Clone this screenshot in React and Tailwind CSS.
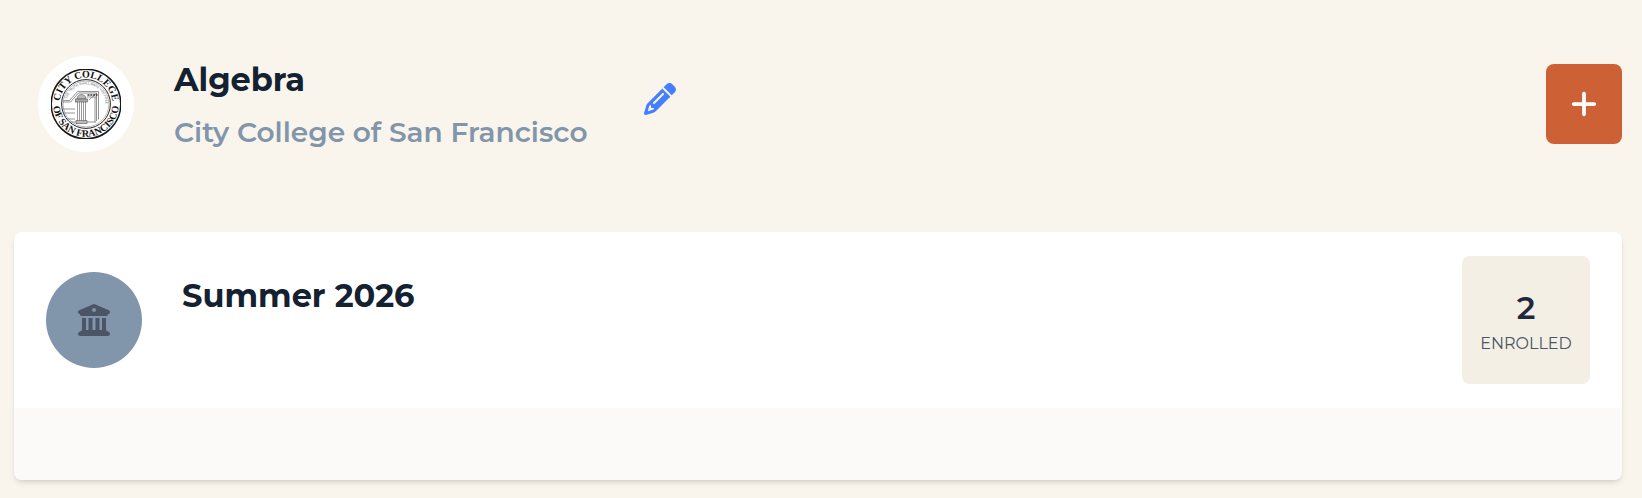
import React from 'react';
import { FaBuildingColumns, FaPencil, FaPlus } from 'react-icons/fa6';

const CollegeSeal = () => (
  <svg viewBox="0 0 70 70" className="w-[70px] h-[70px]" role="img" aria-label="City College of San Francisco seal">
    <defs>
      <path id="seal-top" d="M8.6 35a26.4 26.4 0 0 1 52.8 0" />
      <path id="seal-bottom" d="M2.2 35a32.8 32.8 0 0 0 65.6 0" />
      <path id="seal-motto" d="M15.3 35a19.7 19.7 0 0 1 39.4 0v5" />
    </defs>
    <circle cx="35" cy="35" r="34.8" fill="white" stroke="#161616" strokeWidth="1.5" />
    <circle cx="35" cy="35" r="24.4" fill="none" stroke="#222" strokeWidth="1" />
    <circle cx="35" cy="35" r="22.9" fill="none" stroke="#777" strokeWidth="0.5" />
    <g fill="#111" fontFamily="Liberation Serif, serif" fontWeight="700" textAnchor="middle">
      <text fontSize="10">
        <textPath href="#seal-top" startOffset="50%">CITY COLLEGE</textPath>
      </text>
      <text fontSize="10">
        <textPath href="#seal-bottom" startOffset="50%">OF SAN FRANCISCO</textPath>
      </text>
    </g>
    <text fill="#555" fontSize="3.2" fontFamily="Liberation Sans, sans-serif" textAnchor="middle">
      <textPath href="#seal-motto" startOffset="50%">THE TRUTH SHALL MAKE YOU FREE</textPath>
    </text>
    {/* Archway and column */}
    <g fill="none" stroke="#666" strokeWidth="0.7">
      <path d="M12.500 31.500h6l8-9h21v28" />
      <path d="M12 33h7.500l8-9h18v28M44 28v25" />
      <path d="M36 28h10M38 31l8-7" />
      <path d="M12 40h12M13 44h11M16 50h8M19 53h26" />
    </g>
    <g stroke="#555" strokeWidth="0.6">
      <path d="M26 30c0-6 9-6 9 0z" fill="#bbb" />
      <rect x="24.500" y="30" width="12" height="3" fill="#aaa" />
      <path d="M26.500 33v19M28.500 33v19M30.500 33v19M32.500 33v19M34.500 33v19" />
      <path d="M25 51.500h11v3h-11z" fill="#bbb" />
    </g>
    <path d="M36.500 26h10" stroke="#333" strokeWidth="1.500" strokeDasharray="2 .8" />
  </svg>
);

const ClassHeader = ({ name, college }) => (
  <header className="flex items-center justify-between h-52">
    <div className="flex items-center pl-6">
      <div className="flex items-center justify-center w-24 h-24 rounded-full bg-white">
        <CollegeSeal />
      </div>
      <div className="ml-10 pt-1">
        <h1 className="text-[32px] leading-10 font-bold text-[#132131]">{name}</h1>
        <p className="mt-3 text-[28px] leading-10 font-semibold text-[#8195ab]">{college}</p>
      </div>
      <button type="button" aria-label="Edit class" className="ml-14 mb-2.5 text-[#457fff]">
        <FaPencil className="w-8 h-8" />
      </button>
    </div>
    <button
      type="button"
      aria-label="Add term"
      className="flex items-center justify-center w-[76px] h-20 rounded-lg bg-[#cd6034] text-white"
    >
      <FaPlus className="w-[30px] h-[30px]" />
    </button>
  </header>
);

const TermCard = ({ term, enrolled }) => (
  <section className="mt-6 rounded-lg overflow-hidden bg-white shadow-md">
    <div className="flex justify-between px-8 py-6">
      <div className="flex pt-4">
        <div className="flex items-center justify-center w-24 h-24 rounded-full bg-[#8195ab] text-[#4b5565]">
          <FaBuildingColumns className="w-8 h-8" />
        </div>
        <h2 className="ml-10 mt-1 text-[32px] leading-10 font-bold text-[#132131]">{term}</h2>
      </div>
      <div className="flex flex-col items-center justify-center w-32 h-32 pt-2 rounded-lg bg-[#f4efe4]">
        <span className="text-[32px] leading-10 font-semibold text-[#1e293b]">{enrolled}</span>
        <span className="text-base leading-8 uppercase text-[#4b5565]">Enrolled</span>
      </div>
    </div>
    <div className="h-[72px] bg-[#fbfaf8]" />
  </section>
);

const App = () => {
  return (
    <main className="min-h-screen pl-3.5 pr-5 pb-4 bg-[#f9f5ec] font-[Montserrat,Inter,sans-serif]">
      <ClassHeader name="Algebra" college="City College of San Francisco" />
      <TermCard term="Summer 2026" enrolled={2} />
    </main>
  );
};

export default App;
